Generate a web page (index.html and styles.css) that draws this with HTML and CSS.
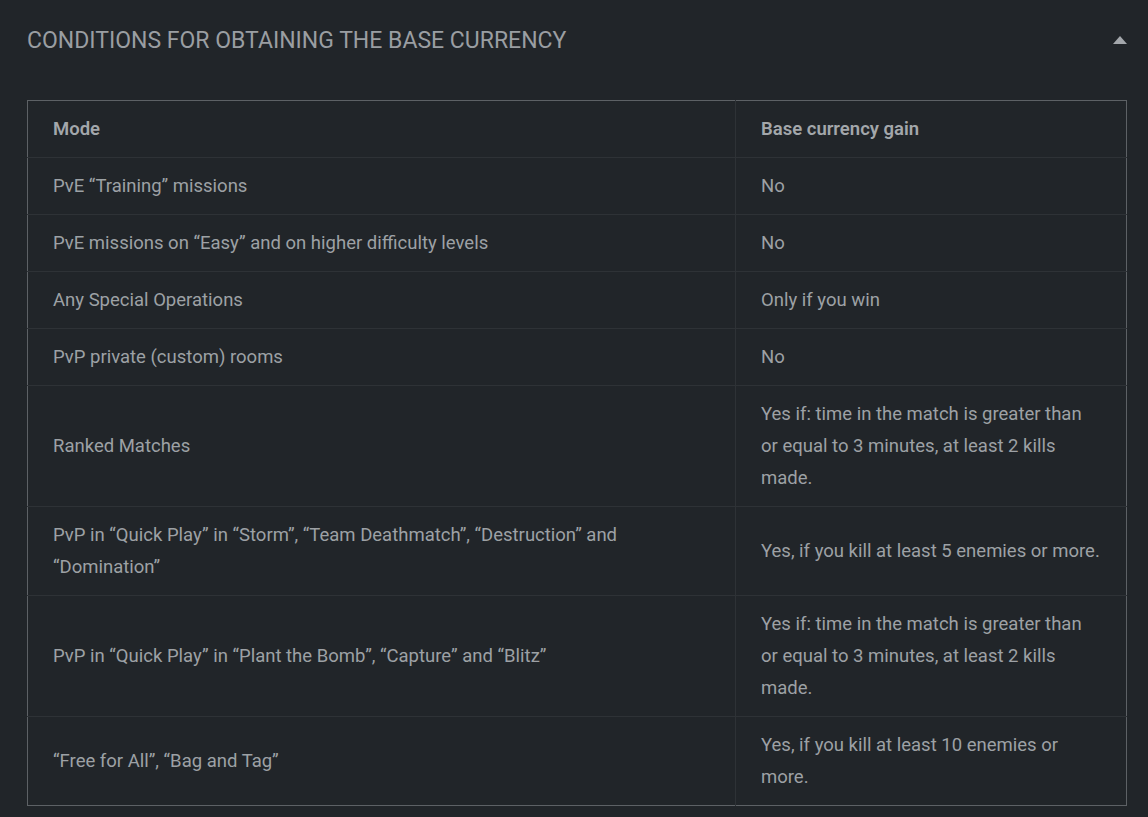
FILE: index.html
```html
<!DOCTYPE html>
<html>
<head>
<meta charset="utf-8">
<link rel="stylesheet" href="styles.css">
</head>
<body>
<section class="panel">
  <div class="panel-head">
    <h2 class="panel-title">CONDITIONS FOR OBTAINING THE BASE CURRENCY</h2>
    <svg class="caret" width="14" height="8" viewBox="0 0 14 8"><polygon points="0,8 14,8 7,0" fill="#a3a7ab"/></svg>
  </div>
  <table class="conds">
    <thead>
      <tr><th class="c1">Mode</th><th>Base currency gain</th></tr>
    </thead>
    <tbody>
      <tr><td>PvE “Training” missions</td><td>No</td></tr>
      <tr><td>PvE missions on “Easy” and on higher difficulty levels</td><td>No</td></tr>
      <tr><td>Any Special Operations</td><td>Only if you win</td></tr>
      <tr><td>PvP private (custom) rooms</td><td>No</td></tr>
      <tr><td>Ranked Matches</td><td>Yes if: time in the match is greater than or equal to 3 minutes, at least 2 kills made.</td></tr>
      <tr><td>PvP in “Quick Play” in “Storm”, “Team Deathmatch”, “Destruction” and “Domination”</td><td>Yes, if you kill at least 5 enemies or more.</td></tr>
      <tr><td>PvP in “Quick Play” in “Plant the Bomb”, “Capture” and “Blitz”</td><td>Yes if: time in the match is greater than or equal to 3 minutes, at least 2 kills made.</td></tr>
      <tr><td>“Free for All”, “Bag and Tag”</td><td>Yes, if you kill at least 10 enemies or more.</td></tr>
    </tbody>
  </table>
</section>
</body>
</html>
```
FILE: styles.css
```css
html, body {
  margin: 0;
  padding: 0;
  background: #212529;
}
body {
  font-family: Roboto, "Liberation Sans", sans-serif;
  color: #9da1a5;
}
.panel {
  padding: 0 21px 0 27px;
}
.panel-head {
  display: flex;
  align-items: center;
  justify-content: space-between;
  height: 81px;
  margin-bottom: 19px;
}
.panel-title {
  margin: 0;
  font-weight: 400;
  font-size: 23px;
  letter-spacing: 0;
  color: #9a9ea2;
}
.caret {
  margin-top: -2px;
}
.conds {
  width: 1100px;
  border-collapse: collapse;
  border: 1px solid #5d6165;
  font-size: 18.5px;
  line-height: 32px;
}
.conds th, .conds td {
  text-align: left;
  vertical-align: middle;
  padding: 12px 25px 12px 25px;
  border-bottom: 1px solid #2e3236;
}
.conds th + th, .conds td + td {
  border-left: 1px solid #2e3236;
}
.conds th {
  font-weight: 600;
  color: #a3a7ab;
}
.conds .c1 {
  width: 657px;
}
.conds tr:last-child td {
  border-bottom: none;
}
```
